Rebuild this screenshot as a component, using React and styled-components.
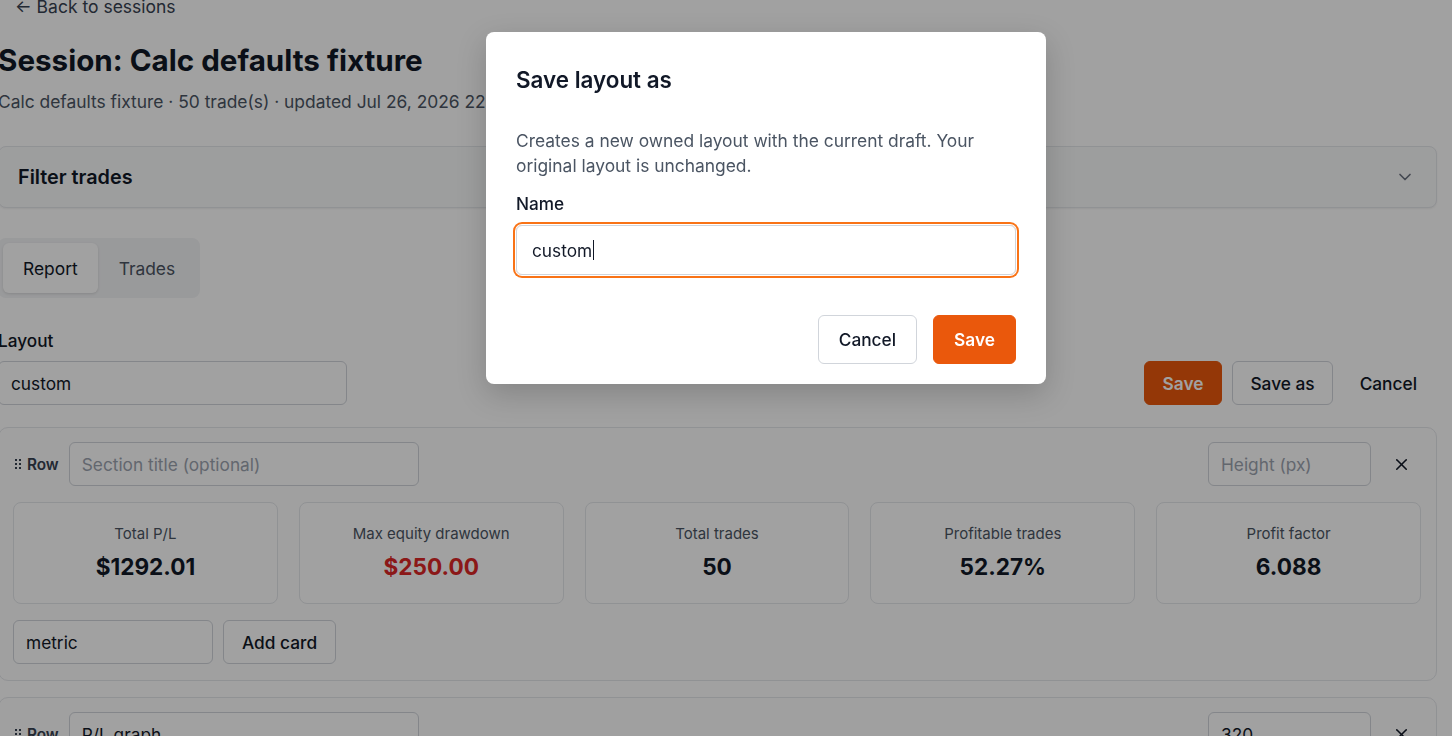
import React from 'react';
import styled, { createGlobalStyle } from 'styled-components';
import { ChevronDown, X } from 'lucide-react';

const GlobalStyle = createGlobalStyle`
  html, body {
    margin: 0;
    padding: 0;
    background: #ffffff;
    overflow: hidden;
    font-family: Inter, "Noto Sans", sans-serif;
    color: #111827;
  }
  * { box-sizing: border-box; }
`;

const Page = styled.div`
  width: 1439px;
  margin-left: -2px;
  margin-top: -5px;
  display: flex;
  flex-direction: column;
`;

const BackLink = styled.a`
  font-size: 17.5px;
  line-height: 24px;
  color: #374151;
  padding-left: 17px;
  text-decoration: none;
`;

const Title = styled.h1`
  margin: 23px 0 0;
  font-size: 29.6px;
  line-height: 36px;
  font-weight: 700;
  color: #111827;
`;

const Subtitle = styled.p`
  margin: 12px 0 0;
  font-size: 17.4px;
  line-height: 24px;
  color: #4b5563;
`;

const FilterCard = styled.div`
  margin-top: 32px;
  height: 62px;
  border: 1px solid #e5e7eb;
  border-radius: 8px;
  background: #f9fafb;
  display: flex;
  align-items: center;
  justify-content: space-between;
  padding: 0 21px 0 19px;
  font-size: 19.8px;
  font-weight: 600;
  color: #111827;
  box-shadow: 0 1px 2px rgba(0, 0, 0, 0.06);
`;

const Tabs = styled.div`
  margin-top: 30px;
  align-self: flex-start;
  display: flex;
  gap: 1px;
  padding: 5px;
  height: 60px;
  background: #f3f4f6;
  border-radius: 8px;
`;

const Tab = styled.button`
  border: none;
  font-family: inherit;
  font-size: 17.4px;
  padding: 0 20px;
  border-radius: 6px;
  background: ${p => (p.$active ? '#ffffff' : 'transparent')};
  color: ${p => (p.$active ? '#111827' : '#4b5563')};
  box-shadow: ${p => (p.$active ? '0 1px 3px rgba(0,0,0,0.12)' : 'none')};
`;

const LayoutRow = styled.div`
  margin-top: 31px;
  display: flex;
  align-items: flex-end;
  justify-content: space-between;
`;

const Field = styled.div`
  display: flex;
  flex-direction: column;
  gap: 8px;
`;

const Label = styled.label`
  font-size: 17.2px;
  line-height: 24px;
  font-weight: 500;
  color: #111827;
`;

const TextInput = styled.input`
  width: ${p => p.$w || 349}px;
  height: ${p => p.$h || 44}px;
  border: 1px solid #d1d5db;
  border-radius: 6px;
  background: #ffffff;
  padding: 0 12px;
  font-family: inherit;
  font-size: 17.3px;
  color: #111827;
  outline: none;
  &::placeholder { color: #9ca3af; }
`;

const Actions = styled.div`
  display: flex;
  gap: 10px;
  padding-right: 3px;
`;

const Button = styled.button`
  height: ${p => p.$h || 44}px;
  padding: 0 ${p => p.$px || 18}px;
  border-radius: 6px;
  font-family: inherit;
  font-size: 17.3px;
  font-weight: ${p => (p.$variant === 'primary' ? 600 : 500)};
  border: 1px solid ${p => (p.$variant === 'primary' ? '#ea580c' : p.$variant === 'ghost' ? 'transparent' : '#d1d5db')};
  background: ${p => (p.$variant === 'primary' ? '#ea580c' : p.$variant === 'ghost' ? 'transparent' : '#ffffff')};
  color: ${p => (p.$variant === 'primary' ? '#ffffff' : '#111827')};
`;

const RowCard = styled.section`
  margin-top: ${p => p.$mt}px;
  border: 1px solid #e5e7eb;
  border-radius: 10px;
  background: #fdfdfd;
  padding: 14px 15px 16px 14px;
  display: flex;
  flex-direction: column;
  gap: 16px;
`;

const RowHeader = styled.div`
  display: flex;
  align-items: center;
  gap: 10px;
`;

const RowTag = styled.span`
  display: flex;
  align-items: center;
  gap: 6px;
  font-size: 15.3px;
  font-weight: 600;
  color: #374151;
  padding-left: 2px;
`;

const Spacer = styled.div`
  flex: 1;
`;

const IconButton = styled.button`
  width: 40px;
  height: 36px;
  border: none;
  background: transparent;
  display: flex;
  align-items: center;
  justify-content: center;
  color: #111827;
  padding: 0;
`;

const CardGrid = styled.div`
  display: grid;
  grid-template-columns: repeat(5, 1fr);
  gap: 21px;
`;

const MetricCard = styled.div`
  height: 102px;
  border: 1px solid #e5e7eb;
  border-radius: 8px;
  background: #ffffff;
  display: flex;
  flex-direction: column;
  align-items: center;
  justify-content: center;
  gap: 9px;
`;

const MetricLabel = styled.div`
  font-size: 15px;
  line-height: 20px;
  color: #4b5563;
  margin-top: -2px;
`;

const MetricValue = styled.div`
  font-size: 22.6px;
  line-height: 28px;
  font-weight: 700;
  color: ${p => (p.$negative ? '#dc2626' : '#111827')};
`;

const AddRow = styled.div`
  display: flex;
  gap: 10px;
`;

const Overlay = styled.div`
  position: fixed;
  inset: 0;
  background: rgba(0, 0, 0, 0.37);
`;

const Dialog = styled.div`
  position: fixed;
  left: 486px;
  top: 32px;
  width: 560px;
  background: #ffffff;
  border-radius: 8px;
  padding: 32px 30px 20px;
  box-shadow: 0 10px 30px rgba(0, 0, 0, 0.18);
`;

const DialogTitle = styled.h2`
  margin: 0;
  font-size: 22.4px;
  line-height: 32px;
  font-weight: 600;
  color: #111827;
`;

const DialogText = styled.p`
  margin: 32px 0 0;
  font-size: 17.4px;
  line-height: 25px;
  color: #4b5563;
`;

const DialogField = styled(Field)`
  margin-top: 14px;
  gap: 9px;
`;

const FocusWrap = styled.div`
  position: relative;
  border-radius: 6px;
  box-shadow: 0 0 0 1px #ffffff, 0 0 0 3px #f97316;
`;

const Caret = styled.span`
  position: absolute;
  left: 77px;
  top: 15px;
  width: 1px;
  height: 20px;
  background: #111827;
`;

const DialogActions = styled.div`
  margin-top: 40px;
  display: flex;
  justify-content: flex-end;
  gap: 16px;
`;

const GripIcon = () => (
  <svg width="6" height="10" viewBox="0 0 6 10" fill="#374151">
    <rect x="0" y="0" width="2" height="2" />
    <rect x="4" y="0" width="2" height="2" />
    <rect x="0" y="4" width="2" height="2" />
    <rect x="4" y="4" width="2" height="2" />
    <rect x="0" y="8" width="2" height="2" />
    <rect x="4" y="8" width="2" height="2" />
  </svg>
);

const metrics = [
  { label: 'Total P/L', value: '$1292.01' },
  { label: 'Max equity drawdown', value: '$250.00', negative: true },
  { label: 'Total trades', value: '50' },
  { label: 'Profitable trades', value: '52.27%' },
  { label: 'Profit factor', value: '6.088' },
];

function RowEditor({ mt, title, height, children }) {
  return (
    <RowCard $mt={mt}>
      <RowHeader>
        <RowTag><GripIcon />Row</RowTag>
        <TextInput $w={350} placeholder="Section title (optional)" defaultValue={title} />
        <Spacer />
        <TextInput $w={163} placeholder="Height (px)" defaultValue={height} />
        <IconButton><X size={19} strokeWidth={2} /></IconButton>
      </RowHeader>
      {children}
    </RowCard>
  );
}

export default function App() {
  return (
    <>
      <GlobalStyle />
      <Page>
        <BackLink href="#">← Back to sessions</BackLink>
        <Title>Session: Calc defaults fixture</Title>
        <Subtitle>Calc defaults fixture · 50 trade(s) · updated Jul 26, 2026 22:14</Subtitle>
        <FilterCard>
          Filter trades
          <ChevronDown size={20} color="#6b7280" />
        </FilterCard>
        <Tabs>
          <Tab $active>Report</Tab>
          <Tab>Trades</Tab>
        </Tabs>
        <LayoutRow>
          <Field>
            <Label>Layout</Label>
            <TextInput defaultValue="custom" />
          </Field>
          <Actions>
            <Button $variant="primary" $px={18}>Save</Button>
            <Button $px={17}>Save as</Button>
            <Button $variant="ghost" $px={16}>Cancel</Button>
          </Actions>
        </LayoutRow>
        <RowEditor mt={22}>
          <CardGrid>
            {metrics.map(m => (
              <MetricCard key={m.label}>
                <MetricLabel>{m.label}</MetricLabel>
                <MetricValue $negative={m.negative}>{m.value}</MetricValue>
              </MetricCard>
            ))}
          </CardGrid>
          <AddRow>
            <TextInput $w={200} defaultValue="metric" />
            <Button $px={18}>Add card</Button>
          </AddRow>
        </RowEditor>
        <RowEditor mt={16} title="P/L graph" height="320">
          <CardGrid>
            <MetricCard />
          </CardGrid>
        </RowEditor>
      </Page>
      <Overlay />
      <Dialog>
        <DialogTitle>Save layout as</DialogTitle>
        <DialogText>
          Creates a new owned layout with the current draft. Your original layout is unchanged.
        </DialogText>
        <DialogField>
          <Label>Name</Label>
          <FocusWrap>
            <TextInput $w={500} $h={50} defaultValue="custom" readOnly style={{ paddingLeft: 15 }} />
            <Caret />
          </FocusWrap>
        </DialogField>
        <DialogActions>
          <Button $h={49} $px={20}>Cancel</Button>
          <Button $variant="primary" $h={49} $px={20}>Save</Button>
        </DialogActions>
      </Dialog>
    </>
  );
}
